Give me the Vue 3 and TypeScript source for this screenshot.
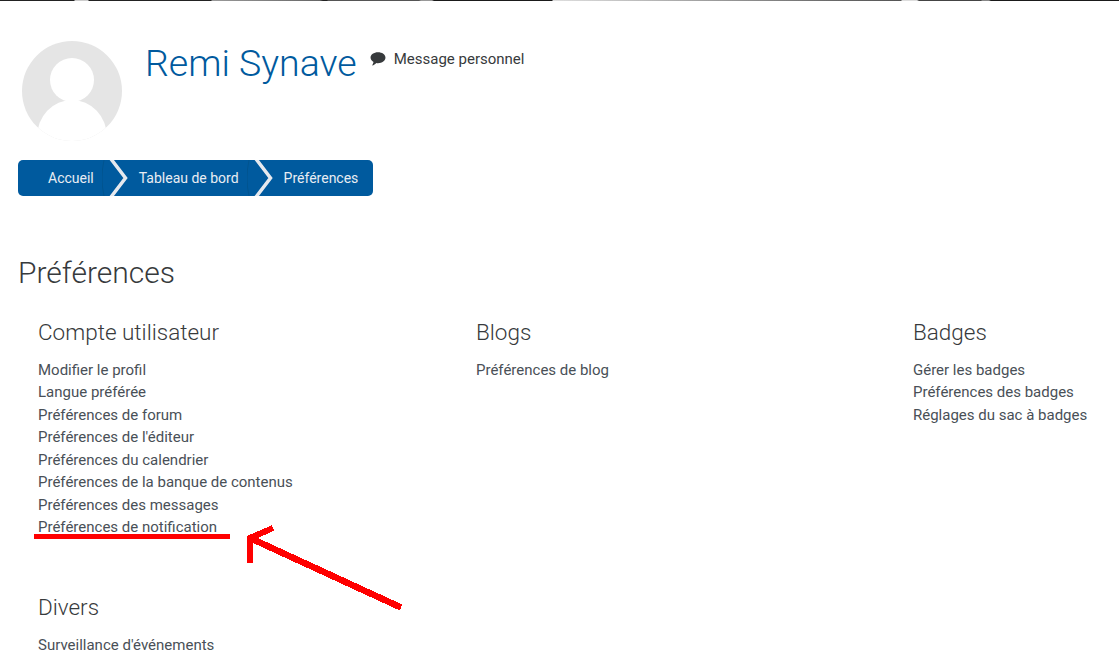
<script setup lang="ts">
interface Group { title: string; links: string[] }
const first: Group[] = [
  { title: 'Compte utilisateur', links: ['Modifier le profil', 'Langue préférée', 'Préférences de forum', "Préférences de l'éditeur", 'Préférences du calendrier', 'Préférences de la banque de contenus', 'Préférences des messages', 'Préférences de notification'] },
  { title: 'Divers', links: ["Surveillance d'événements"] },
]
const blogs: Group = { title: 'Blogs', links: ['Préférences de blog'] }
const badges: Group = { title: 'Badges', links: ['Gérer les badges', 'Préférences des badges', 'Réglages du sac à badges'] }
</script>

<template>
  <div class="page">
    <div class="strip"></div>
    <header class="head">
      <svg class="avatar" viewBox="0 0 100 100" width="100" height="100">
        <defs><clipPath id="round"><circle cx="50" cy="50" r="50" /></clipPath></defs>
        <g clip-path="url(#round)">
          <rect width="100" height="100" fill="#e5e5e5" />
          <circle cx="50" cy="39" r="22" fill="#fff" />
          <ellipse cx="50" cy="96" rx="35" ry="37" fill="#fff" />
        </g>
      </svg>
      <h1 class="name">Remi Synave</h1>
      <a class="message">
        <svg class="bubble" viewBox="0 0 16 15" width="16" height="14">
          <path d="M8 0.3C3.6 0.3 0 2.8 0 6c0 1.9 1.2 3.5 3.2 4.6-.2 1.3-.9 2.6-1.5 3.9 1.8-.4 3.4-1.4 4.6-2.7.6.1 1.1.2 1.7.2 4.4 0 8-2.7 8-6S12.400.3 8 .3z" fill="#373a3c" />
        </svg>
        Message personnel
      </a>
    </header>

    <nav class="crumbs">
      <span class="crumb home">Accueil</span>
      <svg class="chev first" viewBox="0 0 28 36" width="28" height="36"><path d="M2 0Q-2 18 2 36" fill="none" stroke="#00548f" stroke-width="1" /><path d="M9 -1L23.500 18L9 37" fill="none" stroke="#e6e9ee" stroke-width="3.500" /></svg>
      <span class="crumb mid">Tableau de bord</span>
      <svg class="chev second" viewBox="0 0 28 36" width="28" height="36"><path d="M2 0Q-2 18 2 36" fill="none" stroke="#00548f" stroke-width="1" /><path d="M9 -1L23.500 18L9 37" fill="none" stroke="#e6e9ee" stroke-width="3.500" /></svg>
      <span class="crumb last">Préférences</span>
    </nav>

    <h2 class="title">Préférences</h2>

    <div class="cols">
      <div class="col c1">
        <section v-for="g in first" :key="g.title" class="group">
          <h3>{{ g.title }}</h3>
          <a v-for="l in g.links" :key="l" class="link">{{ l }}</a>
        </section>
      </div>
      <div class="col c2">
        <section class="group">
          <h3>{{ blogs.title }}</h3>
          <a v-for="l in blogs.links" :key="l" class="link">{{ l }}</a>
        </section>
      </div>
      <div class="col c3">
        <section class="group">
          <h3>{{ badges.title }}</h3>
          <a v-for="l in badges.links" :key="l" class="link">{{ l }}</a>
        </section>
      </div>
    </div>

    <svg class="marks" width="1119" height="670" viewBox="0 0 1119 670" shape-rendering="crispEdges">
      <path d="M34 536.500H230" stroke="#ff0000" stroke-width="5" fill="none" />
      <path d="M401 607.500L250 538" stroke="#ff0000" stroke-width="6.500" fill="none" />
      <path d="M273 528L250 538L250.500 563" stroke="#ff0000" stroke-width="6" fill="none" />
    </svg>
  </div>
</template>

<style>
html, body { margin: 0; background: #fff; }
</style>

<style scoped>
.page {
  position: relative;
  width: 1119px;
  height: 670px;
  overflow: hidden;
  background: #fff;
  font-family: Roboto, "Liberation Sans", sans-serif;
  font-size: 15px;
  color: #373a3c;
}
.strip {
  height: 1px;
  background: linear-gradient(90deg, #222 0, #222 74px, #ccc 75px, #ccc 88px, #222 89px, #222 211px, #999 212px, #666 320px, #222 323px, #222 327px, #555 328px, #555 419px, #999 421px, #999 432px, #1a1a1a 434px, #1a1a1a 552px, #ddd 553px, #ccc 600px, #666 840px, #555 901px, #ddd 902px, #ddd 917px, #444 919px, #444 981px, #888 982px, #888 989px, #1a1a1a 991px, #1a1a1a 1119px);
}
.head {
  display: flex;
  align-items: flex-start;
  padding: 39px 0 0 22px;
  height: 120px;
}
.avatar { flex: none; display: block; margin-top: 1px; }
.name {
  margin: 0 0 0 23px;
  font-size: 37.5px;
  font-weight: 300;
  line-height: 46px;
  color: #005a9e;
  white-space: nowrap;
}
.message {
  display: flex;
  align-items: center;
  gap: 8px;
  margin: 10px 0 0 13px;
  line-height: 18px;
}
.bubble { flex: none; }
.crumbs {
  display: flex;
  align-items: center;
  width: 355px;
  height: 36px;
  margin-left: 18px;
  background: #005a9e;
  border-radius: 5px;
  overflow: hidden;
  color: #e8edf3;
  font-size: 14px;
  white-space: nowrap;
}
.crumb { display: block; }
.home { margin-left: 30px; }
.chev { flex: none; display: block; }
.chev.first { margin-left: 8px; }
.chev.second { margin-left: 8px; }
.mid { margin-left: 9px; }
.last { margin-left: 9px; }
.title {
  margin: 59px 0 0 18px;
  font-size: 30px;
  font-weight: 300;
  line-height: 36px;
}
.cols {
  display: flex;
  margin-top: 27px;
  padding-left: 38px;
}
.col { flex: none; }
.c1 { width: 438px; }
.c2 { width: 437px; }
.group { display: flex; flex-direction: column; margin-bottom: 54.500px; align-items: flex-start; }
.group h3 {
  margin: 0 0 12.500px;
  font-size: 22.500px;
  font-weight: 300;
  line-height: 28px;
}
.link {
  line-height: 22.500px;
  color: #495057;
  white-space: nowrap;
}
.marks {
  position: absolute;
  left: 0;
  top: 0;
  pointer-events: none;
}
</style>
